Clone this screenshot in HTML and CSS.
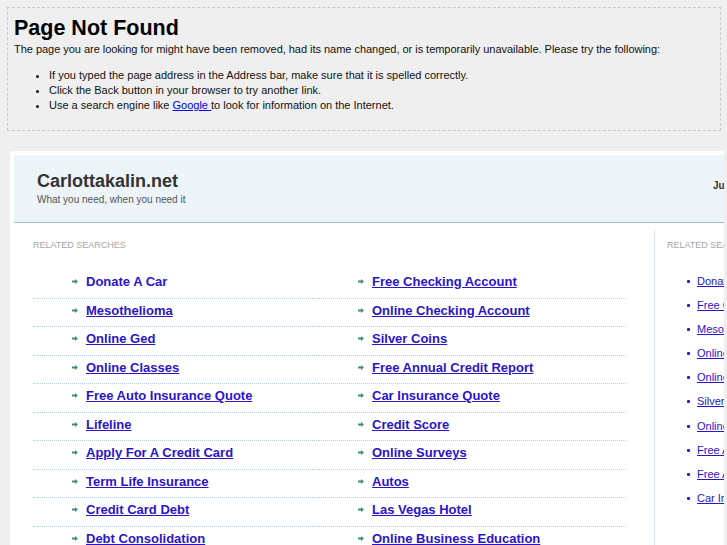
FILE: index.html
```html
<!DOCTYPE html>
<html lang="en">
<head>
<meta charset="utf-8">
<title>Page Not Found</title>
<link rel="stylesheet" href="styles.css">
</head>
<body>
<div class="notice">
  <h1>Page Not Found</h1>
  <p>The page you are looking for might have been removed, had its name changed, or is temporarily unavailable. Please try the following:</p>
  <ul>
    <li>If you typed the page address in the Address bar, make sure that it is spelled correctly.</li>
    <li>Click the Back button in your browser to try another link.</li>
    <li>Use a search engine like <a href="#">Google </a>to look for information on the Internet.</li>
  </ul>
</div>

<div class="frame">
  <div class="page">
    <header class="site-head">
      <div class="brand">
        <div class="site-name">Carlottakalin.net</div>
        <div class="tagline">What you need, when you need it</div>
      </div>
      <div class="date">June 15, 2011</div>
    </header>
    <div class="content">
      <main class="results">
        <h2 class="label">Related Searches</h2>
        <ul class="links">
          <li><svg class="arr" viewBox="0 0 6 5"><path d="M0 1.5h3V0l3 2.5L3 5V3.5H0z"/></svg><a class="plain" href="#">Donate A Car</a></li>
          <li><svg class="arr" viewBox="0 0 6 5"><path d="M0 1.5h3V0l3 2.5L3 5V3.5H0z"/></svg><a href="#">Free Checking Account</a></li>
          <li><svg class="arr" viewBox="0 0 6 5"><path d="M0 1.5h3V0l3 2.5L3 5V3.5H0z"/></svg><a href="#">Mesothelioma</a></li>
          <li><svg class="arr" viewBox="0 0 6 5"><path d="M0 1.5h3V0l3 2.5L3 5V3.5H0z"/></svg><a href="#">Online Checking Account</a></li>
          <li><svg class="arr" viewBox="0 0 6 5"><path d="M0 1.5h3V0l3 2.5L3 5V3.5H0z"/></svg><a href="#">Online Ged</a></li>
          <li><svg class="arr" viewBox="0 0 6 5"><path d="M0 1.5h3V0l3 2.5L3 5V3.5H0z"/></svg><a href="#">Silver Coins</a></li>
          <li><svg class="arr" viewBox="0 0 6 5"><path d="M0 1.5h3V0l3 2.5L3 5V3.5H0z"/></svg><a href="#">Online Classes</a></li>
          <li><svg class="arr" viewBox="0 0 6 5"><path d="M0 1.5h3V0l3 2.5L3 5V3.5H0z"/></svg><a href="#">Free Annual Credit Report</a></li>
          <li><svg class="arr" viewBox="0 0 6 5"><path d="M0 1.5h3V0l3 2.5L3 5V3.5H0z"/></svg><a href="#">Free Auto Insurance Quote</a></li>
          <li><svg class="arr" viewBox="0 0 6 5"><path d="M0 1.5h3V0l3 2.5L3 5V3.5H0z"/></svg><a href="#">Car Insurance Quote</a></li>
          <li><svg class="arr" viewBox="0 0 6 5"><path d="M0 1.5h3V0l3 2.5L3 5V3.5H0z"/></svg><a href="#">Lifeline</a></li>
          <li><svg class="arr" viewBox="0 0 6 5"><path d="M0 1.5h3V0l3 2.5L3 5V3.5H0z"/></svg><a href="#">Credit Score</a></li>
          <li><svg class="arr" viewBox="0 0 6 5"><path d="M0 1.5h3V0l3 2.5L3 5V3.5H0z"/></svg><a href="#">Apply For A Credit Card</a></li>
          <li><svg class="arr" viewBox="0 0 6 5"><path d="M0 1.5h3V0l3 2.5L3 5V3.5H0z"/></svg><a href="#">Online Surveys</a></li>
          <li><svg class="arr" viewBox="0 0 6 5"><path d="M0 1.5h3V0l3 2.5L3 5V3.5H0z"/></svg><a href="#">Term Life Insurance</a></li>
          <li><svg class="arr" viewBox="0 0 6 5"><path d="M0 1.5h3V0l3 2.5L3 5V3.5H0z"/></svg><a href="#">Autos</a></li>
          <li><svg class="arr" viewBox="0 0 6 5"><path d="M0 1.5h3V0l3 2.5L3 5V3.5H0z"/></svg><a href="#">Credit Card Debt</a></li>
          <li><svg class="arr" viewBox="0 0 6 5"><path d="M0 1.5h3V0l3 2.5L3 5V3.5H0z"/></svg><a href="#">Las Vegas Hotel</a></li>
          <li><svg class="arr" viewBox="0 0 6 5"><path d="M0 1.5h3V0l3 2.5L3 5V3.5H0z"/></svg><a href="#">Debt Consolidation</a></li>
          <li><svg class="arr" viewBox="0 0 6 5"><path d="M0 1.5h3V0l3 2.5L3 5V3.5H0z"/></svg><a href="#">Online Business Education</a></li>
        </ul>
      </main>
      <aside class="side">
        <h2 class="label">Related Searches</h2>
        <ul class="side-links">
          <li><a href="#">Donate A Car</a></li>
          <li><a href="#">Free Checking Account</a></li>
          <li><a href="#">Mesothelioma</a></li>
          <li><a href="#">Online Checking Account</a></li>
          <li><a href="#">Online Ged</a></li>
          <li><a href="#">Silver Coins</a></li>
          <li><a href="#">Online Classes</a></li>
          <li><a href="#">Free Annual Credit Report</a></li>
          <li><a href="#">Free Auto Insurance Quote</a></li>
          <li><a href="#">Car Insurance Quote</a></li>
        </ul>
      </aside>
    </div>
  </div>
</div>
</body>
</html>
```

FILE: styles.css
```css
html, body {
  margin: 0;
  padding: 0;
}
body {
  background: #efefef;
  font-family: "Liberation Sans", Arial, sans-serif;
  color: #111;
  overflow: hidden;
}

/* ---------- 404 notice ---------- */
.notice {
  margin: 7px 6px 0 7px;
  border: 1px dashed #c9c9c9;
  padding: 8px 6px 17px 6px;
}
.notice h1 {
  margin: 0;
  font-size: 21.5px;
  line-height: 24px;
  font-weight: bold;
  color: #000;
}
.notice p {
  margin: 2px 0 0 0;
  font-size: 11px;
  line-height: 15px;
  letter-spacing: -0.03px;
}
.notice ul {
  margin: 11px 0 0 0;
  padding-left: 35px;
  font-size: 11px;
  line-height: 15px;
}
.notice a {
  color: #0000ee;
}

/* ---------- parked page frame ---------- */
.frame {
  margin: 20px 0 0 10px;
  width: 710px;
  padding: 4px 0 0 4px;
  background: #fff;
  overflow: hidden;
  height: 400px;
}
.page {
  width: 960px;
}
.site-head {
  display: flex;
  height: 68px;
  padding: 15px 0 0 23px;
  box-sizing: border-box;
  background-color: #eef5f8;
  background-image: radial-gradient(#e4eef2 0.6px, transparent 0.8px);
  background-size: 4px 4px;
  border-bottom: 1px solid #9dbde6;
}
.brand {
  width: 676px;
}
.site-name {
  font-size: 18px;
  line-height: 22px;
  font-weight: bold;
  color: #333;
}
.tagline {
  margin-top: 1px;
  font-size: 10px;
  line-height: 13px;
  color: #555;
}
.date {
  margin-top: 9px;
  font-size: 10px;
  line-height: 13px;
  font-weight: bold;
  color: #333;
  white-space: nowrap;
}

.content {
  display: flex;
  align-items: stretch;
}
.label {
  margin: 0;
  font-size: 9px;
  line-height: 12px;
  font-weight: normal;
  text-transform: uppercase;
  color: #a6a6a6;
}
.results {
  width: 621px;
  padding: 16px 0 0 19px;
}
.links {
  list-style: none;
  margin: 19px 0 0 0;
  padding: 0;
  width: 593px;
  display: grid;
  grid-template-columns: 286px 307px;
}
.links li {
  padding: 3px 0 7px 39px;
  font-size: 13px;
  line-height: 17.5px;
  border-bottom: 1px dotted #b5cbe6;
  white-space: nowrap;
}
.arr {
  width: 6px;
  height: 5px;
  margin-right: 8px;
  fill: #3b8e83;
  vertical-align: 2px;
}
.links a {
  font-size: 13px;
  font-weight: bold;
  color: #2a14cc;
}
.links a.plain {
  text-decoration: none;
}

.side {
  margin-top: 6px;
  padding: 10px 0 0 12px;
  border-left: 1px solid #d6e3f3;
  width: 260px;
  height: 320px;
}
.side-links {
  list-style: none;
  margin: 18px 0 0 0;
  padding: 0 0 0 20px;
}
.side-links li {
  padding: 5px 0 5.1px 0;
  line-height: 14px;
  font-size: 11px;
  white-space: nowrap;
}
.side-links li::before {
  content: "";
  display: inline-block;
  width: 3px;
  height: 3px;
  border-radius: 1px;
  background: #2a14cc;
  margin-right: 7px;
  vertical-align: 2px;
}
.side-links a {
  color: #2a14cc;
}
```
